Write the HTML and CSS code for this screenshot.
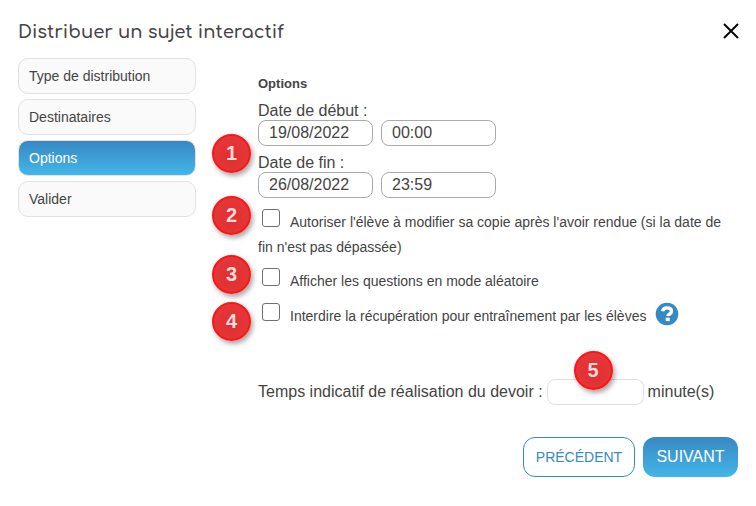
FILE: index.html
```html
<!DOCTYPE html>
<html lang="fr">
<head>
<meta charset="utf-8">
<meta name="viewport" content="width=device-width, initial-scale=1">
<title>Distribuer un sujet interactif</title>
<link rel="stylesheet" href="styles.css">
</head>
<body>
<main class="dialog">
  <header class="dialog-header">
    <h1 class="dialog-title">Distribuer un sujet interactif</h1>
    <button class="close" type="button" aria-label="Fermer">
      <svg viewBox="0 0 14 16" width="14" height="16" aria-hidden="true"><path d="M0 0L14 14M14 0L0 14" stroke="#050508" stroke-width="2" fill="none"/></svg>
    </button>
  </header>
  <div class="dialog-body">
    <nav class="steps">
      <a class="step" href="#">Type de distribution</a>
      <a class="step" href="#">Destinataires</a>
      <a class="step step-active" href="#" aria-current="step">Options</a>
      <a class="step" href="#">Valider</a>
    </nav>
    <form class="options">
      <h2 class="options-title">Options</h2>
      <div class="dates">
        <span class="badge badge-dates">1</span>
        <div class="date-field">
          <label class="date-label" for="start-date">Date de début :</label>
          <div class="date-inputs">
            <input class="field" id="start-date" type="text" value="19/08/2022">
            <input class="field" type="text" value="00:00" aria-label="Heure de début">
          </div>
        </div>
        <div class="date-field">
          <label class="date-label" for="end-date">Date de fin :</label>
          <div class="date-inputs">
            <input class="field" id="end-date" type="text" value="26/08/2022">
            <input class="field" type="text" value="23:59" aria-label="Heure de fin">
          </div>
        </div>
      </div>
      <div class="choices">
        <div class="choice">
          <span class="badge badge-high">2</span>
          <label><input class="check" type="checkbox">Autoriser l'élève à modifier sa copie après l'avoir rendue (si la date de fin n'est pas dépassée)</label>
        </div>
        <div class="choice">
          <span class="badge badge-high">3</span>
          <label><input class="check" type="checkbox">Afficher les questions en mode aléatoire</label>
        </div>
        <div class="choice">
          <span class="badge badge-low">4</span>
          <label><input class="check" type="checkbox">Interdire la récupération pour entraînement par les élèves</label>
          <button class="help" type="button" aria-label="Aide">
            <svg viewBox="0 0 24 24" width="24" height="24" aria-hidden="true"><circle cx="12" cy="12" r="11.3" fill="#3589c5"/><path d="M7.6 9.3C8 6.9 9.8 5.9 12 5.9c2.6 0 4.5 1.2 4.5 3.3 0 2.9-3.6 2.6-3.6 4.9" fill="none" stroke="#fff" stroke-width="3.4"/><path d="M10.7 15.6h4v3.5h-4z" fill="#fff"/></svg>
          </button>
        </div>
      </div>
      <div class="duration">
        <label for="duration">Temps indicatif de réalisation du devoir :</label>
        <span class="duration-box">
          <input class="field field-light" id="duration" type="text">
          <span class="badge badge-duration">5</span>
        </span>
        <span>minute(s)</span>
      </div>
    </form>
  </div>
  <footer class="actions">
    <button class="action action-outline" type="button">PRÉCÉDENT</button>
    <button class="action action-solid" type="button">SUIVANT</button>
  </footer>
</main>
</body>
</html>
```

FILE: styles.css
```css
* {
  box-sizing: border-box;
}

body {
  margin: 0;
  background: #fff;
  color: #444;
  font: 16px/18px "Liberation Sans", Arial, sans-serif;
}

.dialog {
  padding: 18px;
}

.dialog-header {
  display: flex;
  align-items: center;
  justify-content: space-between;
  margin-bottom: 12px;
}

.dialog-title {
  margin: 0;
  font: 600 18px/28px Comfortaa, Lato, sans-serif;
}

.close,
.help {
  padding: 0;
  border: 0;
  background: none;
  cursor: pointer;
}

.close svg,
.help svg {
  display: block;
  overflow: visible;
}

.dialog-body {
  display: grid;
  grid-template-columns: 178px 1fr;
  gap: 62px;
}

.steps {
  display: flex;
  flex-direction: column;
  gap: 5px;
}

.step {
  padding: 8px 10px;
  border: 1px solid #e2e2e2;
  border-radius: 10px;
  background: #fafafa;
  color: #444;
  font-size: 14px;
  text-decoration: none;
}

.step-active,
.action-solid {
  background: linear-gradient(#3888c2, #43b6e8);
  color: #fff;
}

.options {
  padding-top: 17px;
}

.options-title {
  margin: 0 0 9px;
  font-size: 13px;
  line-height: 18px;
}

.dates {
  position: relative;
  display: grid;
  gap: 8px;
}

.date-label {
  display: block;
}

.date-inputs {
  display: flex;
  gap: 8px;
}

.field {
  width: 115px;
  height: 26px;
  padding: 0 10px;
  border: 1px solid #aaa;
  border-radius: 8px;
  background: #fff;
  color: #444;
  font: inherit;
}

.field-light {
  display: block;
  width: 97px;
  border-color: #e0e0e0;
}

.choices {
  display: grid;
  gap: 8px;
  margin-top: 11px;
  font-size: 14px;
  line-height: 25px;
}

.choice {
  position: relative;
}

.check {
  appearance: none;
  width: 18px;
  height: 18px;
  margin: 0 10px 0 4px;
  border: 1px solid #707070;
  border-radius: 3px;
  background: #fff;
  vertical-align: baseline;
}

.check:checked {
  background: #3589c5;
}

.help {
  display: inline-block;
  height: 19px;
  margin-left: 5px;
  vertical-align: baseline;
}

.duration {
  display: flex;
  align-items: center;
  gap: 4px;
  margin-top: 50px;
}

.duration-box {
  position: relative;
}

.badge {
  position: absolute;
  left: -46px;
  z-index: 1;
  width: 39px;
  height: 39px;
  border: 2px solid #ff1414;
  border-radius: 50%;
  background: radial-gradient(circle at 50% 60%, #e02e30, #e63b3d);
  box-shadow: 2px 3px 5px rgba(0, 0, 0, 0.35);
  color: #fbdcdc;
  font: bold 20px/35px "Liberation Sans", Arial, sans-serif;
  text-align: center;
}

.badge-dates {
  top: 32px;
}

.badge-high {
  top: -13px;
}

.badge-low {
  top: 0;
}

.badge-duration {
  top: -28px;
  left: 27px;
}

.actions {
  display: flex;
  justify-content: flex-end;
  gap: 8px;
  margin-top: 32px;
}

.action {
  height: 40px;
  min-width: 95px;
  padding: 0 8px;
  border: 1px solid #3589c5;
  border-radius: 12px;
  font: 14px/24px "Liberation Sans Narrow", "Liberation Sans", Arial, sans-serif;
  cursor: pointer;
}

.action-outline {
  min-width: 112px;
  background: #fff;
  color: #3589c5;
}

.action-solid {
  border: 0;
  font-size: 16px;
}
```
